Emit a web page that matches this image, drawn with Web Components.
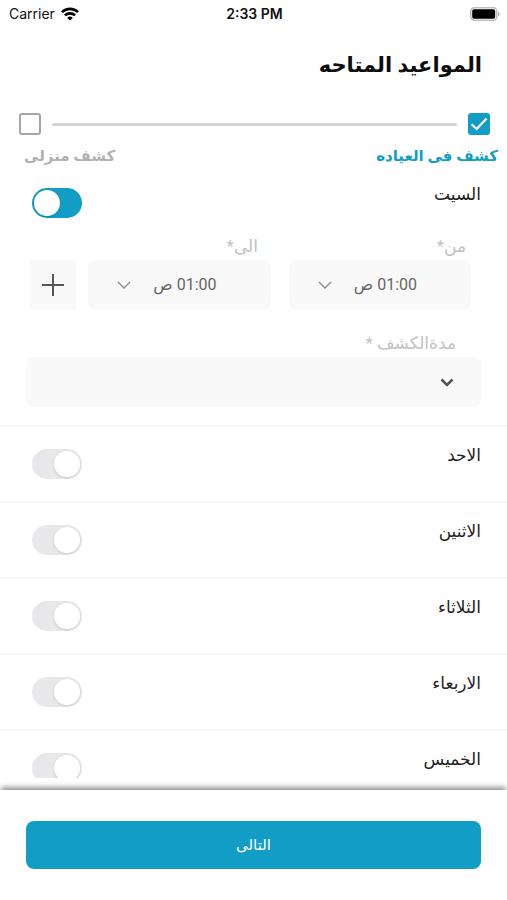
<!DOCTYPE html>
<html lang="ar" dir="rtl">
<head>
<meta charset="utf-8">
<meta name="viewport" content="width=device-width, initial-scale=1">
<title>المواعيد المتاحه</title>
<style>
  html, body { margin: 0; height: 100%; }
  body {
    --accent: #119dc6;
    --field: #f9f9f9;
    --muted: #c2c2c2;
    background: #fff;
    color: #222;
    font-family: Roboto, "DejaVu Sans", sans-serif;
    font-size: 17px;
    line-height: 24px;
  }
</style>
</head>
<body>
<schedule-app>
  <status-bar slot="top" carrier="Carrier" time="2:33 PM"></status-bar>
  <page-title slot="top">المواعيد المتاحه</page-title>
  <visit-steps slot="top"></visit-steps>
  <day-row name="السيت" open><day-hours></day-hours></day-row>
  <day-row name="الاحد"></day-row>
  <day-row name="الاثنين"></day-row>
  <day-row name="الثلاثاء"></day-row>
  <day-row name="الاربعاء"></day-row>
  <day-row name="الخميس"></day-row>
  <next-button slot="bottom">التالى</next-button>
</schedule-app>

<script>
const define = (name, render) => customElements.define(name, class extends HTMLElement {
  connectedCallback() {
    if (this.shadowRoot) return;
    this.attachShadow({ mode: 'open' }).innerHTML =
      '<style>*{box-sizing:border-box}</style>' + render(this);
  }
});

define('schedule-app', () => `
  <style>
    :host { display: flex; flex-direction: column; height: 100vh; }
    main { flex: 1; min-height: 0; overflow-y: auto; scrollbar-width: none; }
    footer { margin-top: 12px; padding: 31px 26px; background: #fff; box-shadow: 0 -4px 5px -1px #999; }
  </style>
  <header><slot name="top"></slot></header>
  <main><slot></slot></main>
  <footer><slot name="bottom"></slot></footer>`);

define('status-bar', el => `
  <style>
    :host { display: grid; grid-template-columns: 1fr auto 1fr; align-items: center; direction: ltr;
      height: 28px; padding: 0 7px 0 9px; color: #111; font: 14px/20px Inter, sans-serif; }
    .left { display: flex; align-items: center; gap: 6px; }
    time { font-weight: 600; }
    .battery { justify-self: end; }
    svg { display: block; }
  </style>
  <span class="left">${el.getAttribute('carrier')}
    <svg width="18" height="14" viewBox="0 0 18 14" fill="none" stroke="#000" stroke-width="2.700" aria-hidden="true">
      <path d="M1 5.100a11.500 11.500 0 0 1 16 0"/><path d="M3.900 8.400a7.300 7.300 0 0 1 10.200 0"/>
      <path d="M9 13.600 6.200 10.900a4 4 0 0 1 5.600 0z" fill="#000" stroke="none"/>
    </svg></span>
  <time>${el.getAttribute('time')}</time>
  <svg class="battery" width="30" height="14" viewBox="0 0 30 14" aria-hidden="true">
    <rect x=".8" y=".8" width="26" height="12.400" rx="3.600" fill="#fff" stroke="#bdbdbd" stroke-width="1.500"/>
    <rect x="2.200" y="2.200" width="23" height="9.600" rx="1.800" fill="#000"/>
    <path d="M28 4.800c2.200.5 2.200 3.900 0 4.400z" fill="#b4b4b4"/>
  </svg>`);

define('page-title', () => `
  <style>
    :host { display: block; padding: 21px 25px 0; }
    h1 { margin: 0; color: #0c0c0c; font-size: 21px; line-height: 32px; font-weight: 700; }
  </style>
  <h1><slot></slot></h1>`);

define('visit-steps', () => `
  <style>
    :host { display: block; padding-top: 32px; }
    .track { display: flex; align-items: center; gap: 11px; padding: 0 17px 0 19px; }
    .track i { flex: 1; height: 3px; border-radius: 2px; background: #d4d4d4; }
    input { appearance: none; display: grid; width: 22px; height: 22px; margin: 0;
      border: 2px solid #a6a6a6; border-radius: 3px; background: #fff; }
    input:checked { border-color: var(--accent); background: var(--accent); }
    .tick { display: grid; }
    .tick > * { grid-area: 1 / 1; }
    .tick svg { z-index: 1; pointer-events: none; }
    .tick input:not(:checked) + svg { visibility: hidden; }
    .labels { display: flex; justify-content: space-between; padding: 10px 9px 0 24px;
      color: #b0b0b0; font-size: 15px; line-height: 23px; font-weight: 700; }
    .labels .on { color: var(--accent); }
  </style>
  <div class="track">
    <span class="tick"><input type="checkbox" id="clinic" checked>
      <svg width="22" height="22" viewBox="0 0 22 22" fill="none" stroke="#fff" stroke-width="2.200" aria-hidden="true"><path d="M3.600 11.200 8.600 16 18.600 5.600"/></svg></span>
    <i></i>
    <span class="tick"><input type="checkbox" id="home">
      <svg width="22" height="22" viewBox="0 0 22 22" fill="none" stroke="#fff" stroke-width="2.200" aria-hidden="true"><path d="M3.600 11.200 8.600 16 18.600 5.600"/></svg></span>
  </div>
  <div class="labels"><label class="on" for="clinic">كشف فى العياده</label><label for="home">كشف منزلى</label></div>`);

define('day-row', el => `
  <style>
    :host { display: block; border-bottom: 2px solid #f5f5f5; }
    .head { display: flex; justify-content: space-between; align-items: flex-start;
      height: 74px; padding: 16px 26px 0 32px; }
    :host([open]) .head { height: 64px; padding-top: 14px; }
    label { color: #222; }
    input { appearance: none; display: flex; justify-content: flex-start; flex: none;
      width: 50px; height: 30px; margin: 6px 0 0; padding: 2px; border-radius: 15px; background: #e8e8ea; }
    input::before { content: ""; width: 26px; height: 26px; border-radius: 50%; background: #fff;
      box-shadow: 0 1px 3px #0002; }
    input:checked { justify-content: flex-end; background: var(--accent); }
  </style>
  <div class="head">
    <label for="on">${el.getAttribute('name')}</label>
    <input type="checkbox" role="switch" id="on" ${el.hasAttribute('open') ? 'checked' : ''}>
  </div>
  <slot></slot>`);

define('day-hours', () => {
  const time = id => `
    <span class="pick"><select id="${id}"><option>01:00 ص</option></select>
      <svg width="14" height="8" viewBox="0 0 14 8" fill="none" stroke="#8a8a8a" stroke-width="1.400" aria-hidden="true"><path d="M1 1l6 6 6-6"/></svg></span>`;
  return `
  <style>
    :host { display: block; padding: 0 26px 18px; color: var(--muted); }
    .names { display: grid; grid-template-columns: 1fr 1fr 20px; padding: 2px 15px 2px 4px; }
    .times { display: flex; gap: 12px; padding: 0 10px 0 4px; }
    .range { flex: 1; display: grid; grid-template-columns: 1fr 1fr; gap: 18px; }
    .pick { display: grid; align-items: center; }
    .pick > * { grid-area: 1 / 1; }
    .pick svg { justify-self: end; margin-inline-end: 29px; z-index: 1; pointer-events: none; }
    select, button { appearance: none; width: 100%; height: 50px; margin: 0; border: 0; border-radius: 8px;
      background: var(--field); color: #666; font: inherit; font-size: 16px; }
    select { padding: 0 54px 0 0; }
    button { display: grid; place-items: center; width: 46px; padding: 0; border-radius: 3px; }
    .length { display: block; padding: 21px 25px 2px; }
    .wide svg { justify-self: start; margin-inline-start: 27px; }
  </style>
  <div class="names"><label for="from">من*</label><label for="to">الى*</label></div>
  <div class="times">
    <div class="range">${time('from')}${time('to')}</div>
    <button type="button" aria-label="اضافة"><svg width="24" height="24" viewBox="0 0 24 24" stroke="#555" stroke-width="2" aria-hidden="true"><path d="M12 1v22M1 12h22"/></svg></button>
  </div>
  <label class="length" for="length">مدةالكشف *</label>
  <span class="pick wide"><select id="length"><option></option></select>
    <svg width="14" height="9" viewBox="0 0 14 9" fill="none" stroke="#555" stroke-width="2.600" aria-hidden="true"><path d="M1.500 1.500 7 7l5.500-5.500"/></svg></span>`;
});

define('next-button', () => `
  <style>
    :host { display: block; }
    button { display: block; width: 100%; height: 48px; border: 0; border-radius: 8px;
      background: var(--accent); color: #fff; font: inherit; font-size: 15px; }
  </style>
  <button type="button"><slot></slot></button>`);
</script>
</body>
</html>
